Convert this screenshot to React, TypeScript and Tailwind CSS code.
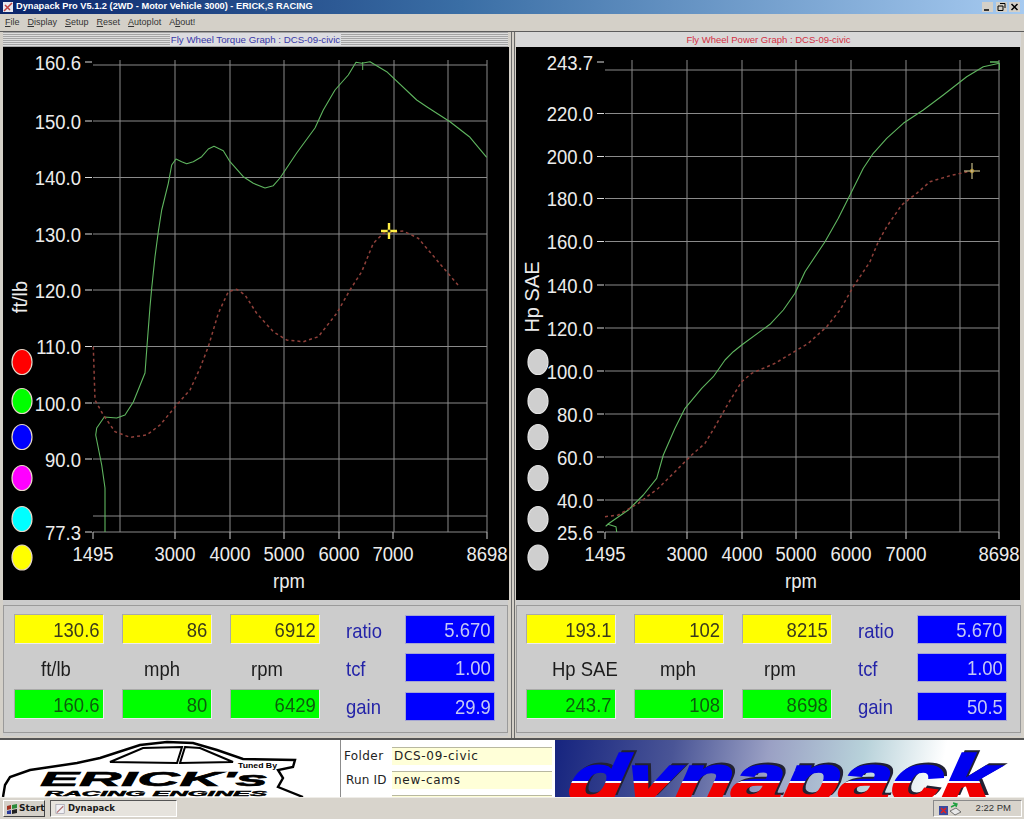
import React from 'react';

type Pt = [number, number];

const toPoints = (pts: Pt[]) => pts.map(p => p.join(',')).join(' ');

const leftGreen: Pt[] = [
  [105, 532], [105, 488], [101.7, 465], [99.3, 453], [95.7, 435], [96.7, 428], [104.3, 417], [116.7, 418], [125, 415],
  [133.3, 402], [145, 373], [146.7, 350], [150, 306.7], [151.7, 288.3], [155, 256.7], [158.3, 231.7], [161.7, 210],
  [168.3, 183.3], [171.7, 165], [176, 159], [181.7, 161.7], [186.7, 163.7], [193.3, 161.7], [201.7, 156.7], [208.3, 149],
  [214, 146.3], [223.3, 150.7], [230, 161.7], [243.3, 176.7], [253.3, 183.3], [265, 188], [273.3, 185.7], [280, 178],
  [296.7, 153], [315, 128], [323.3, 110], [335, 90], [348.3, 75], [356, 62.3], [361.7, 63.3], [370, 61.7], [386.7, 71.7],
  [416.7, 100], [426.7, 106.7], [450, 121.7], [470, 137.3], [486.7, 157.3],
];

const leftRed: Pt[] = [
  [93.3, 346.7], [95, 400], [103.3, 415], [115, 431.7], [130, 437.3], [146.7, 435], [160, 425], [176.7, 405], [190, 390],
  [200, 368.3], [208.3, 346.7], [218.3, 313.3], [228.3, 291.7], [236.7, 289.3], [245, 295], [256.7, 313.3], [273.3, 331.7],
  [286.7, 340], [303.3, 341.7], [318.3, 336.7], [336.7, 313.3], [350, 290], [361.7, 271.7], [373.3, 243.3], [383.3, 233.3],
  [403.3, 231], [418.3, 238.3], [436.7, 260], [460, 287.3],
];

const rightGreen: Pt[] = [
  [616.7, 532], [616, 526.7], [608, 524.3], [606, 526], [607.7, 524.3], [628.3, 510], [643.3, 495], [656.7, 478.3], [663.3, 455],
  [675, 428.3], [685, 408.3], [701.7, 388.3], [713.3, 376.7], [725, 360], [733.3, 351.7], [741.7, 345], [770, 324.3],
  [783.3, 310], [795, 293.3], [805, 271.7], [825, 241.7], [838.3, 218.3], [850, 195], [863.3, 168.3], [873.3, 153.3],
  [886.7, 138.3], [903.3, 123.3], [923.3, 110], [943.3, 95], [966.7, 76.7], [983.3, 66.7], [999.3, 63.3], [999.3, 70],
];

const rightRed: Pt[] = [
  [605, 516.7], [618.3, 515], [638.3, 503.3], [658.3, 488.3], [675, 471.7], [691.7, 455], [705, 443.3], [715, 426.7],
  [728.3, 403.3], [741.7, 381.7], [751.7, 373.3], [775, 363.3], [808.3, 343.3], [826.7, 326.7], [840, 310], [853.3, 286.7],
  [870, 261.7], [878.3, 241.7], [886.7, 226.7], [901.7, 205], [916.7, 193.3], [930, 181.7], [950, 175.7], [972.3, 170.7],
];

const dotYs = [362, 401, 437, 478, 519, 557.5];
const dotColors = ['#ff0000', '#00ff00', '#0000ff', '#ff00ff', '#00ffff', '#ffff00'];

const Narrow = ({ x, y, anchor = 'middle', children }: { x: number; y: number; anchor?: 'end' | 'middle'; children: React.ReactNode }) => (
  <text transform={`translate(${x},${y}) scale(.88,1)`} textAnchor={anchor} fontSize="21" fill="#ececec">
    {children}
  </text>
);

type ChartProps = {
  viewBox: string;
  width: number;
  x0: number;
  x1: number;
  xLabels: [string, number][];
  vLines: number[];
  hLines: number[];
  yLabels: [string, number][];
  labelRight: number;
  top: number;
  yTitle: string;
  yTitleX: number;
  rpmX: number;
  dotX: number;
  grayDots?: boolean;
  green: Pt[];
  red: Pt[];
  children?: React.ReactNode;
};

const Chart = (p: ChartProps) => (
  <svg viewBox={p.viewBox} className="block h-[553px] bg-black shrink-0" style={{ width: p.width }}>
    <g stroke="#8a8a8a" strokeWidth="1">
      {p.vLines.map(x => <line key={x} x1={x} x2={x} y1={p.top} y2={532} />)}
      {p.hLines.map(y => <line key={y} x1={p.x0} x2={p.x1} y1={y} y2={y} />)}
      <line x1={p.x0} x2={p.x1} y1={532} y2={532} />
      {p.xLabels.map(([, x]) => <line key={x} x1={x} x2={x} y1={532} y2={539} stroke="#cfcfcf" />)}
    </g>
    {p.yLabels.map(([label, y]) => (
      <g key={label}>
        <line x1={p.labelRight + 4} x2={p.labelRight + 11} y1={y} y2={y} stroke="#dcdcdc" strokeWidth="1" />
        <Narrow x={p.labelRight} y={y + 7.5} anchor="end">{label}</Narrow>
      </g>
    ))}
    {p.xLabels.map(([label, x]) => <Narrow key={label} x={x} y={561}>{label}</Narrow>)}
    <Narrow x={p.rpmX} y={588}>rpm</Narrow>
    <text transform={`translate(${p.yTitleX},297) rotate(-90)`} textAnchor="middle" fontSize="20" fill="#ececec">{p.yTitle}</text>
    {dotYs.map((y, i) => (
      <ellipse
        key={y}
        cx={p.dotX}
        cy={y}
        rx="10"
        ry="12.5"
        fill={p.grayDots ? '#cfcfcf' : dotColors[i]}
        stroke={p.grayDots ? '#e2e2e2' : '#e6d6c6'}
        strokeWidth="1.2"
      />
    ))}
    <polyline points={toPoints(p.green)} fill="none" stroke="#5fb55f" strokeWidth="1.1" strokeLinejoin="round" />
    <polyline points={toPoints(p.red)} fill="none" stroke="#90403a" strokeWidth="1.5" strokeDasharray="3 3" />
    {p.children}
  </svg>
);

const Value = ({ value, className }: { value: string; className: string }) => (
  <div className={`flex items-center justify-end pr-[3px] border border-t-[#a9a9a9] border-l-[#a9a9a9] border-b-[#ececec] border-r-[#ececec] ${className}`}>
    <span className="inline-block origin-right scale-x-[.88] text-[21px] leading-none">{value}</span>
  </div>
);

const SideLabel = ({ children }: { children: string }) => (
  <span className="inline-block origin-left scale-x-[.88] text-[21px] leading-none text-[#2424a8]">{children}</span>
);

type DataProps = {
  yellow: string[];
  green: string[];
  labels: [string, string][];
  blue: string[];
  pad: string;
};

const DataPanel = ({ yellow, green, labels, blue, pad }: DataProps) => (
  <div className="h-[136px] bg-[#cccccc] pt-[5px] pb-[3px]">
    <div className={`h-[128px] border border-[#9a9a9a] flex ${pad}`}>
      <div className="w-[306px] pt-[8px] shrink-0">
        <div className="flex gap-[18.5px]">
          {yellow.map(v => <Value key={v} value={v} className="w-[90px] h-[30px] bg-[#ffff00] text-[#3a3a1c]" />)}
        </div>
        <div className="flex gap-[18.5px] h-[45px] items-center pt-[8px]">
          {labels.map(([l, c]) => (
            <div key={l} className={`w-[90px] ${c}`}>
              <span className="inline-block origin-left scale-x-[.88] text-[21px] leading-none text-[#1c1c1c] whitespace-nowrap">{l}</span>
            </div>
          ))}
        </div>
        <div className="flex gap-[18.5px]">
          {green.map(v => <Value key={v} value={v} className="w-[90px] h-[30px] bg-[#00ff00] text-[#0c5c0c]" />)}
        </div>
      </div>
      <div className="w-[59px] ml-[26px] pt-[15px] flex flex-col gap-[19px] shrink-0">
        <div className="h-[19px] flex items-center"><SideLabel>ratio</SideLabel></div>
        <div className="h-[19px] flex items-center"><SideLabel>tcf</SideLabel></div>
        <div className="h-[19px] flex items-center"><SideLabel>gain</SideLabel></div>
      </div>
      <div className="w-[90px] pt-[9px] flex flex-col gap-[9px] shrink-0">
        {blue.map((v, i) => (
          <div key={v + i} className={`h-[29px] flex items-center justify-end pr-[3px] bg-[#0000ff] border border-[#a6a6d4] text-[#c4c8f4] ${i === 2 ? 'mt-[1px]' : ''}`}>
            <span className="inline-block origin-right scale-x-[.88] text-[21px] leading-none">{v}</span>
          </div>
        ))}
      </div>
    </div>
  </div>
);

const App: React.FC = () => {
  const leftYs: [string, number][] = [
    ['160.6', 62], ['150.0', 121], ['140.0', 177.5], ['130.0', 234], ['120.0', 290], ['110.0', 346.5], ['100.0', 403], ['90.0', 459], ['77.3', 532],
  ];
  const rightYs: [string, number][] = [
    ['243.7', 62], ['220.0', 113.5], ['200.0', 156.5], ['180.0', 198.5], ['160.0', 241.5], ['140.0', 285], ['120.0', 328], ['100.0', 371], ['80.0', 414], ['60.0', 457], ['40.0', 500], ['25.6', 532],
  ];

  return (
    <div className="w-[1024px] h-[819px] flex flex-col overflow-hidden bg-[#d4d0c8] [font-family:'Liberation_Sans',Arial,sans-serif]">
      <header className="h-[14px] shrink-0 flex items-center bg-[linear-gradient(90deg,#0a246a,#3a6ea5_45%,#a6caf0)] pl-[2px] pr-[4px]">
        <svg viewBox="0 0 12 12" className="w-[12px] h-[12px] mr-[2px] shrink-0">
          <rect x="1" y="1" width="10" height="10" fill="#e8e8f0" />
          <path d="M2 10 L10 2 M3 4 L8 9" stroke="#c04040" strokeWidth="1.5" />
        </svg>
        <span className="text-white font-bold text-[9.25px] leading-none whitespace-nowrap">Dynapack Pro V5.1.2 (2WD - Motor Vehicle 3000) - ERICK,S RACING</span>
        <div className="ml-auto flex items-center">
          <svg viewBox="0 0 11 10" className="w-[11px] h-[10px] bg-[#d4d0c8]"><path d="M2 8 H7" stroke="#000" strokeWidth="1.5" /></svg>
          <svg viewBox="0 0 11 10" className="w-[11px] h-[10px] bg-[#d4d0c8] ml-[3px]"><path d="M4 1.5 H9 V6 M2 4 H7 V8.5 H2 Z" fill="none" stroke="#000" strokeWidth="1" /></svg>
          <svg viewBox="0 0 11 10" className="w-[11px] h-[10px] bg-[#d4d0c8] ml-[2px]"><path d="M2.5 2 L8.5 8 M8.5 2 L2.5 8" stroke="#000" strokeWidth="1.5" /></svg>
        </div>
      </header>

      <nav className="h-[17px] shrink-0 flex items-center gap-[8px] pl-[5px] text-[9px] text-[#333333]">
        <span><u>F</u>ile</span>
        <span><u>D</u>isplay</span>
        <span><u>S</u>etup</span>
        <span><u>R</u>eset</span>
        <span><u>A</u>utoplot</span>
        <span>A<u>b</u>out!</span>
      </nav>

      <main className="h-[707px] shrink-0 flex gap-[2px] border-t border-[#5c5c5c]">
        <section className="w-[512px] flex flex-col border-r border-[#6a6a6a] px-[3px]">
          <div className="h-[15px] shrink-0 flex items-center justify-center bg-[repeating-linear-gradient(0deg,#a4a4a4_0,#a4a4a4_1px,#dedede_1px,#dedede_2px)]">
            <span className="bg-[#dcdce0] px-[1px] text-[9.7px] leading-[13px] text-[#3838a8]">Fly Wheel Torque Graph : DCS-09-civic</span>
          </div>
          <Chart
            viewBox="3 47 506 553"
            width={506}
            x0={93}
            x1={487}
            top={60}
            vLines={[120, 175, 230, 284, 339, 394, 448, 487]}
            hLines={[65, 121, 177.5, 234, 290, 346.5, 403, 459, 516]}
            xLabels={[['1495', 93], ['3000', 175], ['4000', 230], ['5000', 284], ['6000', 339], ['7000', 393], ['8698', 487]]}
            yLabels={leftYs}
            labelRight={81}
            yTitle="ft/lb"
            yTitleX={27}
            rpmX={289}
            dotX={22}
            green={leftGreen}
            red={leftRed}
          >
            <line x1="362.7" x2="362.7" y1="62" y2="70" stroke="#5fb55f" />
            <path d="M381 231 H397 M389 223 V239" stroke="#ffee44" strokeWidth="2.4" />
            <circle cx="389" cy="231" r="1.5" fill="#222222" />
          </Chart>
          <DataPanel
            pad="pl-[10px]"
            yellow={['130.6', '86', '6912']}
            green={['160.6', '80', '6429']}
            labels={[['ft/lb', 'pl-[27px]'], ['mph', 'pl-[22px]'], ['rpm', 'pl-[21px]']]}
            blue={['5.670', '1.00', '29.9']}
          />
        </section>

        <section className="flex-1 flex flex-col border-l border-[#6a6a6a] pl-[1px] pr-[3px]">
          <div className="h-[15px] shrink-0 flex items-center justify-center bg-[#d8d8d8]">
            <span className="text-[9.5px] leading-[13px] text-[#d43044]">Fly Wheel Power Graph : DCS-09-civic</span>
          </div>
          <Chart
            viewBox="516 47 504 553"
            width={504}
            x0={605}
            x1={999}
            top={60}
            vLines={[632, 687, 742, 796, 851, 906, 960, 999]}
            hLines={[70, 113.5, 156.5, 198.5, 241.5, 285, 328, 371, 414, 457, 500]}
            xLabels={[['1495', 605], ['3000', 687], ['4000', 742], ['5000', 796], ['6000', 851], ['7000', 906], ['8698', 999]]}
            yLabels={rightYs}
            labelRight={593}
            yTitle="Hp SAE"
            yTitleX={539}
            rpmX={801}
            dotX={538}
            grayDots
            green={rightGreen}
            red={rightRed}
          >
            <path d="M990 62 H999" stroke="#5fb55f" strokeWidth="1.5" />
            <path d="M964 171 H980 M972 163 V179" stroke="#e8dca0" strokeWidth="1" />
            <circle cx="972" cy="171" r="1.8" fill="none" stroke="#c0a040" />
          </Chart>
          <DataPanel
            pad="pl-[9px]"
            yellow={['193.1', '102', '8215']}
            green={['243.7', '108', '8698']}
            labels={[['Hp SAE', 'pl-[26px]'], ['mph', 'pl-[25px]'], ['rpm', 'pl-[21px]']]}
            blue={['5.670', '1.00', '50.5']}
          />
        </section>
      </main>

      <div className="h-[59px] shrink-0 flex bg-white border-t-2 border-[#555555] overflow-hidden">
        <svg viewBox="0 740 340 57" className="w-[340px] h-[57px] shrink-0">
          <path d="M3 797 L5 785 L10 777 L30 770 L77 763 L100 758 L140 745 L167 742 L193 743 L217 750 L243 759 L295 760 L293 767 L278 770 L283 778 L278 787 L303 797" fill="none" stroke="#000000" strokeWidth="2.4" />
          <path d="M110 762 L143 748 L182 747 L177 763 Z M185 747 L200 748 L233 762 L180 763 Z" fill="none" stroke="#000000" strokeWidth="2" />
          <text x="238" y="768" fontSize="7" fontWeight="700" fill="#000000" textLength="39" lengthAdjust="spacingAndGlyphs">Tuned By</text>
          <text x="40" y="786" fontSize="20" fontWeight="900" fontStyle="italic" fill="#000000" stroke="#000000" strokeWidth=".6" textLength="228" lengthAdjust="spacingAndGlyphs">ERICK's</text>
          <text x="45" y="796" fontSize="7" fontWeight="900" fontStyle="italic" fill="#000000" stroke="#000000" strokeWidth=".4" textLength="222" lengthAdjust="spacingAndGlyphs">RACING ENGINES</text>
        </svg>
        <div className="w-[215px] shrink-0 border-l border-[#8c8c8c] pt-[7px] flex flex-col gap-[6px] [font-family:'DejaVu_Sans',sans-serif] text-[12px]">
          <div className="flex h-[18px] items-center shrink-0">
            <span className="w-[51px] pl-[3px] tracking-[.4px] text-[#222222]">Folder</span>
            <div className="w-[160px] h-[18px] bg-[#ffffd8] border-t border-[#b8b8a0] pl-[2px] leading-[16px] tracking-[.7px] text-[#222222]">DCS-09-civic</div>
          </div>
          <div className="flex h-[18px] items-center shrink-0">
            <span className="w-[51px] pl-[5px] tracking-[.2px] whitespace-nowrap text-[#222222]">Run ID</span>
            <div className="w-[160px] h-[18px] bg-[#ffffd8] border-t border-[#b8b8a0] pl-[2px] leading-[16px] tracking-[.7px] text-[#222222]">new-cams</div>
          </div>
          <div className="flex h-[18px] shrink-0">
            <span className="w-[51px]" />
            <div className="w-[160px] h-[18px] bg-[#ffffd8] border-t border-[#b8b8a0]" />
          </div>
        </div>
        <div className="flex-1 bg-[linear-gradient(100deg,#16247f_0%,#4a5596_25%,#9aa0c4_45%,#b8d2da_65%,#ffffff_82%)]">
          <svg viewBox="555 740 469 57" className="w-full h-[57px] block [filter:drop-shadow(3px_-2px_0_#222233)]">
            <defs>
              <linearGradient id="dynaFill" gradientUnits="userSpaceOnUse" x1="0" x2="0" y1="-51" y2="-1">
                <stop offset="0" stopColor="#0000f0" />
                <stop offset=".63" stopColor="#0000f0" />
                <stop offset=".63" stopColor="#f4f4ff" />
                <stop offset=".66" stopColor="#f4f4ff" />
                <stop offset=".66" stopColor="#f00000" />
                <stop offset="1" stopColor="#f00000" />
              </linearGradient>
            </defs>
            <text transform="translate(566,801) skewX(-10)" x="0" y="0" fontSize="66" fontWeight="700" fontStyle="italic" fill="url(#dynaFill)" stroke="url(#dynaFill)" strokeWidth="2" textLength="425" lengthAdjust="spacingAndGlyphs">dynapack</text>
          </svg>
        </div>
      </div>

      <footer className="h-[22px] shrink-0 flex items-center pl-[3px] pr-[2px] bg-[#d8d4cc] border-t border-[#efede8] text-[10px] text-[#1a1a1a]">
        <button className="w-[42px] h-[17px] flex items-center gap-[1px] pl-[2px] bg-[#d4d0c8] border border-t-white border-l-white border-b-[#444444] border-r-[#444444] font-bold [font-family:'DejaVu_Sans',sans-serif] text-[9px]">
          <svg viewBox="0 0 12 12" className="w-[12px] h-[12px] shrink-0">
            <path d="M1 3 L5 2 V6 L1 7 Z" fill="#a03020" />
            <path d="M6 2 L11 1 V5 L6 6 Z" fill="#2a8a3a" />
            <path d="M1 8 L5 7 V11 L1 11 Z" fill="#2a3a9a" />
            <path d="M6 7 L11 6 V10 L6 11 Z" fill="#222222" />
          </svg>
          Start
        </button>
        <div className="w-[127px] h-[17px] ml-[5px] flex items-center gap-[2px] pl-[4px] bg-[#e6e3dd] border border-t-[#555555] border-l-[#555555] border-b-white border-r-white font-bold [font-family:'DejaVu_Sans',sans-serif] text-[8.5px]">
          <svg viewBox="0 0 12 12" className="w-[11px] h-[12px] shrink-0">
            <rect x="1" y="1" width="9" height="10" fill="#f0f0f4" stroke="#8a8a9a" strokeWidth=".6" />
            <path d="M2 10 L9 3" stroke="#b06a6a" strokeWidth="1.2" />
          </svg>
          Dynapack
        </div>
        <div className="ml-auto w-[89px] h-[17px] flex items-center pl-[4px] border border-t-[#8a8a8a] border-l-[#8a8a8a] border-b-white border-r-white">
          <svg viewBox="0 0 24 14" className="w-[24px] h-[14px] shrink-0">
            <rect x="1" y="4" width="9" height="9" fill="#3a4aa0" />
            <path d="M3 6 L8 11 M8 6 L3 11" stroke="#e02020" strokeWidth="1.6" />
            <path d="M12 9 L18 6 L23 10 L17 13 Z" fill="#e8e8e8" stroke="#444444" strokeWidth=".7" />
            <path d="M13 5 L19 2 M15 1 L19 2 L18 5" fill="none" stroke="#20a040" strokeWidth="1.4" />
          </svg>
          <span className="ml-auto pr-[10px] text-[9.5px] text-[#333333]">2:22 PM</span>
        </div>
      </footer>
    </div>
  );
};

export default App;
